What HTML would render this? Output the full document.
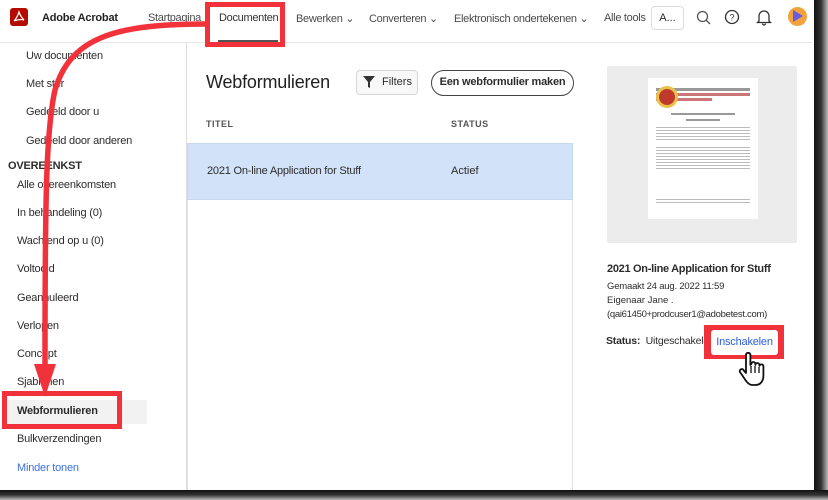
<!DOCTYPE html>
<html><head><meta charset="utf-8"><style>
*{margin:0;padding:0;box-sizing:border-box}
body{width:828px;height:500px;overflow:hidden;background:#fff;font-family:"Liberation Sans",sans-serif;color:#2c2c2c;position:relative}
.abs{position:absolute;white-space:nowrap}
.nav{font-size:11px;color:#4b4b4b;top:12px;letter-spacing:-0.3px}
.sb{font-size:11px;color:#2c2c2c;letter-spacing:-0.2px}
</style></head><body>
<!-- shadows -->
<div class="abs" style="left:814px;top:0;width:14px;height:500px;background:linear-gradient(90deg,#111,#333 50%,#bbb)"></div>
<div class="abs" style="left:0;top:490px;width:828px;height:10px;background:linear-gradient(#111,#333 50%,#bbb)"></div>
<!-- header -->
<div class="abs" style="left:10px;top:8px;width:18px;height:18px;background:#b30b00;border-radius:3px"></div>
<svg class="abs" style="left:12px;top:10px" width="14" height="14"><path d="M7 2c-1 3-3 7-5 9 2-1 7-2 10-1-2-2-4-5-5-8z" fill="none" stroke="#fff" stroke-width="1.2"/></svg>
<div class="abs" style="left:42px;top:12px;font-size:11px;font-weight:bold;color:#222;letter-spacing:-0.2px">Adobe Acrobat</div>
<div class="abs nav" style="left:148px">Startpagina</div>
<div class="abs nav" style="left:219px;color:#333">Documenten</div>
<div class="abs" style="left:218px;top:40px;width:60px;height:2px;background:#555"></div>
<div class="abs nav" style="left:296px">Bewerken ⌄</div>
<div class="abs nav" style="left:369px">Converteren ⌄</div>
<div class="abs nav" style="left:454px">Elektronisch ondertekenen ⌄</div>
<div class="abs nav" style="left:604px">Alle tools</div>
<div class="abs" style="left:651px;top:6px;width:33px;height:24px;border:1px solid #ddd;border-radius:4px;font-size:11px;text-align:center;line-height:22px">A...</div>
<svg class="abs" style="left:696px;top:10px" width="16" height="16"><circle cx="6.5" cy="6.5" r="5" fill="none" stroke="#555" stroke-width="1.3"/><line x1="10" y1="10" x2="14" y2="14" stroke="#555" stroke-width="1.3"/></svg>
<svg class="abs" style="left:724px;top:9px" width="16" height="16"><circle cx="8" cy="8" r="6.5" fill="none" stroke="#333" stroke-width="1.3"/><text x="8" y="11.5" font-size="9" text-anchor="middle" font-family="Liberation Sans" fill="#333">?</text></svg>
<svg class="abs" style="left:756px;top:9px" width="16" height="17"><path d="M3 12V7a5 5 0 0 1 10 0v5l1.5 1.5h-13z M6.5 14.5a1.5 1.5 0 0 0 3 0" fill="none" stroke="#333" stroke-width="1.3"/></svg>
<div class="abs" style="left:788px;top:7px;width:19px;height:19px;border-radius:50%;background:#f2a23c;overflow:hidden"><div style="margin:3px 0 0 5px;width:0;height:0;border-left:10px solid #6a5ae0;border-top:6px solid transparent;border-bottom:6px solid transparent"></div></div>
<div class="abs" style="left:0;top:42px;width:812px;height:1px;background:#e6e6e6"></div>
<!-- sidebar -->
<div class="abs sb" style="left:26px;top:50px">Uw documenten</div>
<div class="abs sb" style="left:26px;top:78px">Met ster</div>
<div class="abs sb" style="left:26px;top:106px">Gedeeld door u</div>
<div class="abs sb" style="left:26px;top:135px">Gedeeld door anderen</div>
<div class="abs sb" style="left:8px;top:160px;font-weight:bold">OVEREENKST</div>
<div class="abs sb" style="left:17px;top:179px">Alle overeenkomsten</div>
<div class="abs sb" style="left:17px;top:207px">In behandeling (0)</div>
<div class="abs sb" style="left:17px;top:235px">Wachtend op u (0)</div>
<div class="abs sb" style="left:17px;top:263px">Voltooid</div>
<div class="abs sb" style="left:17px;top:292px">Geannuleerd</div>
<div class="abs sb" style="left:17px;top:320px">Verlopen</div>
<div class="abs sb" style="left:17px;top:348px">Concept</div>
<div class="abs sb" style="left:17px;top:376px">Sjablonen</div>
<div class="abs" style="left:8px;top:400px;width:139px;height:24px;background:#f2f2f2"></div>
<div class="abs sb" style="left:17px;top:405px;font-weight:bold">Webformulieren</div>
<div class="abs sb" style="left:17px;top:433px">Bulkverzendingen</div>
<div class="abs sb" style="left:17px;top:462px;color:#3e6ee0">Minder tonen</div>
<div class="abs" style="left:186px;top:43px;width:1px;height:447px;background:#ddd"></div>
<!-- main -->
<div class="abs" style="left:206px;top:72px;font-size:18px;color:#222;letter-spacing:-0.2px">Webformulieren</div>
<div class="abs" style="left:356px;top:70px;width:62px;height:25px;border:1px solid #d6d6d6;border-radius:4px;background:#f8f8f8;font-size:11px;line-height:23px;padding-left:25px">Filters</div>
<svg class="abs" style="left:363px;top:76px" width="12" height="12"><path d="M0 0h12L7 6v6L5 11V6z" fill="#333"/></svg>
<div class="abs" style="left:431px;top:70px;width:143px;height:26px;border:1.5px solid #444;border-radius:13px;font-size:11px;font-weight:bold;text-align:center;line-height:23px;letter-spacing:-0.2px">Een webformulier maken</div>
<div class="abs" style="left:206px;top:119px;font-size:9px;font-weight:bold;color:#555;letter-spacing:.5px">TITEL</div>
<div class="abs" style="left:451px;top:119px;font-size:9px;font-weight:bold;color:#555;letter-spacing:.5px">STATUS</div>
<div class="abs" style="left:187px;top:143px;width:386px;height:347px;border:1px solid #e2e2e2;border-bottom:none"></div>
<div class="abs" style="left:187px;top:143px;width:386px;height:57px;background:#d2e3f9;border:1px solid #c8d8ee"></div>
<div class="abs" style="left:207px;top:165px;font-size:11px;letter-spacing:-0.2px">2021 On-line Application for Stuff</div>
<div class="abs" style="left:451px;top:165px;font-size:11px">Actief</div>
<!-- right -->
<div class="abs" style="left:607px;top:66px;width:190px;height:177px;background:#ececec;border-radius:2px"></div>
<div class="abs" style="left:648px;top:78px;width:110px;height:141px;background:#fff;padding:8px 8px">
<div style="width:22px;height:22px;border-radius:50%;background:#c03a2b;border:3px solid #e8c24a;float:left;margin-right:4px"></div>
<div style="height:3px;background:#999;margin:2px 0 2px"></div><div style="height:3px;background:#c77;margin-bottom:2px"></div><div style="height:3px;background:#c77;width:60%;margin-bottom:2px"></div>
<div style="clear:both;height:5px"></div>
<div style="height:2px;background:#999;margin:0 15px 4px"></div><div style="height:2px;background:#999;margin:0 30px 6px"></div>
<div style="height:14px;background:repeating-linear-gradient(#bbb 0 1px,#fff 1px 3px);margin-bottom:6px"></div>
<div style="height:22px;background:repeating-linear-gradient(#bbb 0 1px,#fff 1px 3px)"></div>
<div style="height:6px;background:repeating-linear-gradient(#bbb 0 1px,#fff 1px 3px);margin-top:30px"></div>
</div>
<div class="abs" style="left:607px;top:263px;font-size:11px;font-weight:bold;letter-spacing:-0.3px">2021 On-line Application for Stuff</div>
<div class="abs" style="left:607px;top:281px;font-size:9.5px;letter-spacing:-0.2px">Gemaakt 24 aug. 2022 11:59</div>
<div class="abs" style="left:607px;top:295px;font-size:9.5px">Eigenaar Jane .</div>
<div class="abs" style="left:607px;top:309px;font-size:9.5px;letter-spacing:-0.3px">(qai61450+prodcuser1@adobetest.com)</div>
<div class="abs" style="left:606px;top:335px;font-size:10.5px;letter-spacing:-0.2px"><b>Status:</b>&nbsp; Uitgeschakeld</div>
<div class="abs" style="left:704px;top:325px;width:80px;height:34px;background:#f2323a"></div>
<div class="abs" style="left:711px;top:330px;width:67px;height:25px;background:#fff;border-radius:3px;font-size:11px;color:#2d5ed8;text-align:center;line-height:24px;letter-spacing:-0.2px">Inschakelen</div>
<svg class="abs" style="left:738px;top:352px" width="32" height="36"><path d="M8 3a2.2 2.2 0 0 1 4.4 0v10l1-1a2 2 0 0 1 4 0v1a2 2 0 0 1 4 0v1a2 2 0 0 1 4 .8V24c0 5-3 9-8 9h-3c-3 0-5-2-7-5L2 20a2 2 0 0 1 3-2.5L8 21z" fill="#fff" stroke="#111" stroke-width="1.8" stroke-linejoin="round"/><path d="M13 14v7M17 14v7M21 15v6" stroke="#111" stroke-width="1.3"/></svg>
<!-- red annotations -->
<div class="abs" style="left:205px;top:2px;width:80px;height:45px;border:5px solid #f2323a"></div>
<div class="abs" style="left:2px;top:391px;width:120px;height:38px;border:5px solid #f2323a"></div>
<svg class="abs" style="left:0;top:0" width="828" height="500"><path d="M205 24C110 24 70 40 55 90C46 130 45 200 45 365" fill="none" stroke="#f2323a" stroke-width="5.5"/><path d="M34 364h22l-11 33z" fill="#f2323a"/></svg>
</body></html>
